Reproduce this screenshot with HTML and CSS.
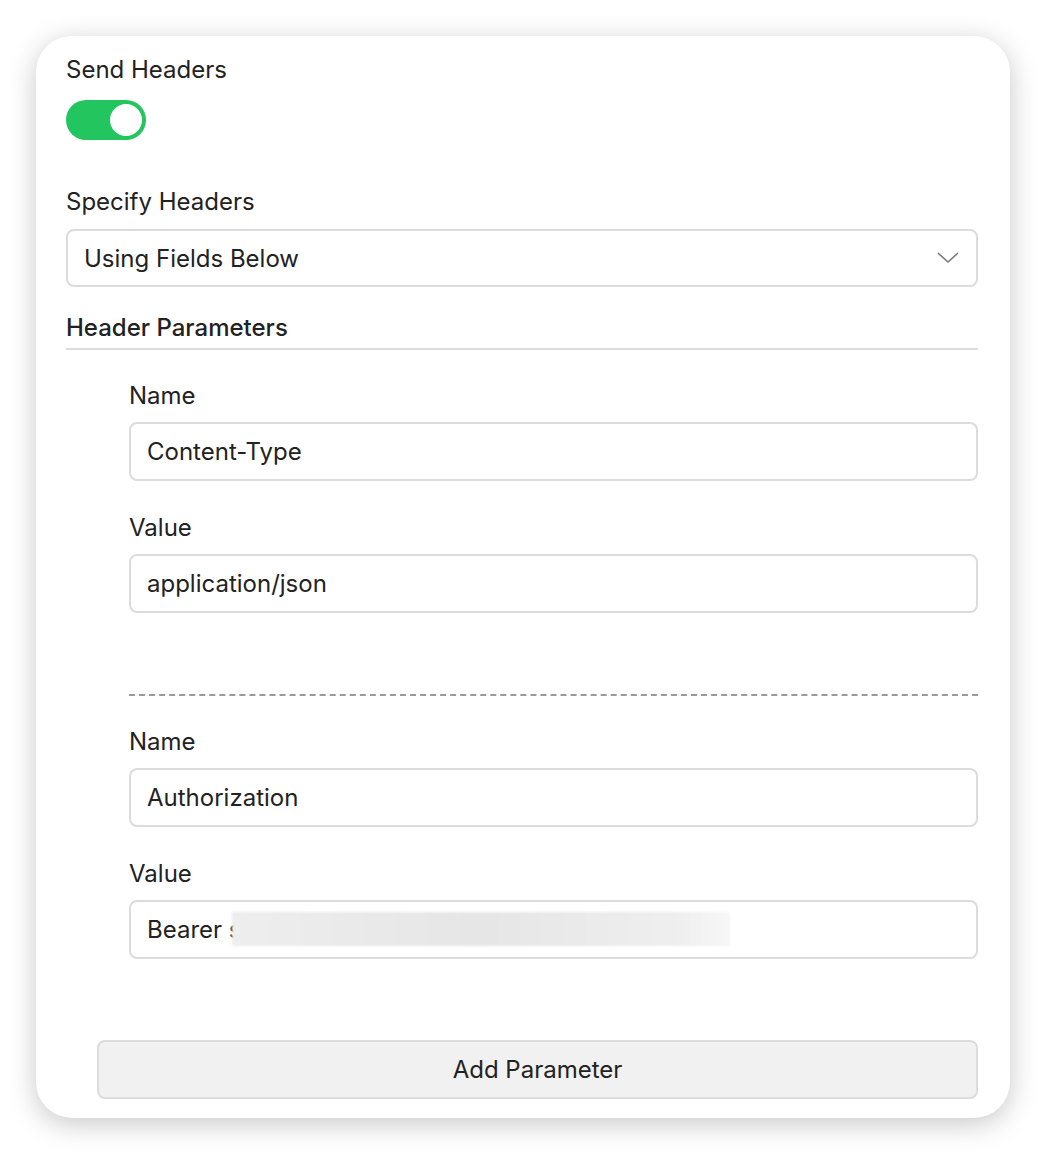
FILE: index.html
```html
<!DOCTYPE html>
<html lang="en">

<head>
    <meta charset="UTF-8">
    <meta name="viewport" content="width=device-width, initial-scale=1.0">
    <title>Send Headers</title>
    <link rel="stylesheet" href="styles.css">
</head>

<body>

    <form class="card">

        <label class="label toggle-label">Send Headers</label>
        <div class="toggle"><span class="knob"></span></div>

        <label class="label spaced" for="specify">Specify Headers</label>
        <div class="select-wrap">
            <select id="specify" class="select">
                <option>Using Fields Below</option>
                <option>Using JSON</option>
            </select>
            <svg class="chevron" width="24" height="14" viewBox="0 0 24 14">
                <polyline points="2,2 12,11 22,2" fill="none" stroke="#7a7a7a" stroke-width="1.6" />
            </svg>
        </div>

        <div class="section-title">Header Parameters</div>

        <div class="params">
            <div class="param">
                <label class="label">Name</label>
                <input class="field" type="text" value="Content-Type">
                <label class="label">Value</label>
                <input class="field" type="text" value="application/json">
            </div>

            <div class="param">
                <label class="label">Name</label>
                <input class="field" type="text" value="Authorization">
                <label class="label">Value</label>
                <div class="field-wrap">
                    <input class="field" type="text" value="Bearer s">
                    <span class="redact"></span>
                </div>
            </div>
        </div>

        <button type="button" class="add-btn">Add Parameter</button>
    </form>

</body>

</html>
```

FILE: styles.css
```css
body {
    font-family: Inter, "Noto Sans", sans-serif;
    background-color: #ffffff;
    color: #222222;
    margin: 0;
    padding: 36px;
}

.card {
    box-sizing: border-box;
    width: 974px;
    background-color: #fff;
    border-radius: 36px;
    box-shadow: 0 6px 28px rgba(0, 0, 0, 0.22);
    padding: 20px 32px 19px 30px;
    display: flex;
    flex-direction: column;
}

.label {
    display: block;
    font-size: 24px;
    line-height: 28px;
    margin-bottom: 12px;
}

.toggle-label {
    margin-bottom: 16px;
}

.spaced {
    margin-top: 48px;
    margin-bottom: 13px;
}

.toggle {
    width: 80px;
    height: 40px;
    border-radius: 20px;
    background-color: #22c55e;
    box-sizing: border-box;
    padding: 4px;
    display: flex;
    justify-content: flex-end;
}

.knob {
    width: 32px;
    height: 32px;
    border-radius: 50%;
    background-color: #fff;
}

.select-wrap,
.field-wrap {
    position: relative;
}

.select,
.field {
    width: 100%;
    height: 59px;
    box-sizing: border-box;
    border: 2px solid #dcdcdc;
    border-radius: 8px;
    background-color: #fff;
    font-family: inherit;
    font-size: 24px;
    color: #222;
    padding: 0 16px;
    margin: 0;
    appearance: none;
    outline: none;
}

.select {
    height: 58px;
}

.chevron {
    position: absolute;
    right: 18px;
    top: 22px;
}

.section-title {
    font-size: 24px;
    font-weight: 500;
    line-height: 28px;
    margin-top: 27px;
    padding-bottom: 6px;
    border-bottom: 2px solid #dcdcdc;
}

.params {
    padding-left: 63px;
    padding-top: 32px;
}

.param .field {
    margin-bottom: 33px;
}

.param + .param {
    border-top: 2px dashed #9a9a9a;
    margin-top: 48px;
    padding-top: 32px;
}

.redact {
    position: absolute;
    left: 103px;
    top: 12px;
    width: 498px;
    height: 34px;
    background: linear-gradient(90deg, #eeeeee, #e6e6e6 50%, #efefef 90%, #f7f7f7);
    filter: blur(1px);
}

.add-btn {
    margin-top: 48px;
    margin-left: 31px;
    height: 59px;
    border: 2px solid #dcdcdc;
    border-radius: 8px;
    background-color: #f1f1f1;
    font-family: inherit;
    font-size: 24px;
    color: #222;
    cursor: pointer;
}
```
